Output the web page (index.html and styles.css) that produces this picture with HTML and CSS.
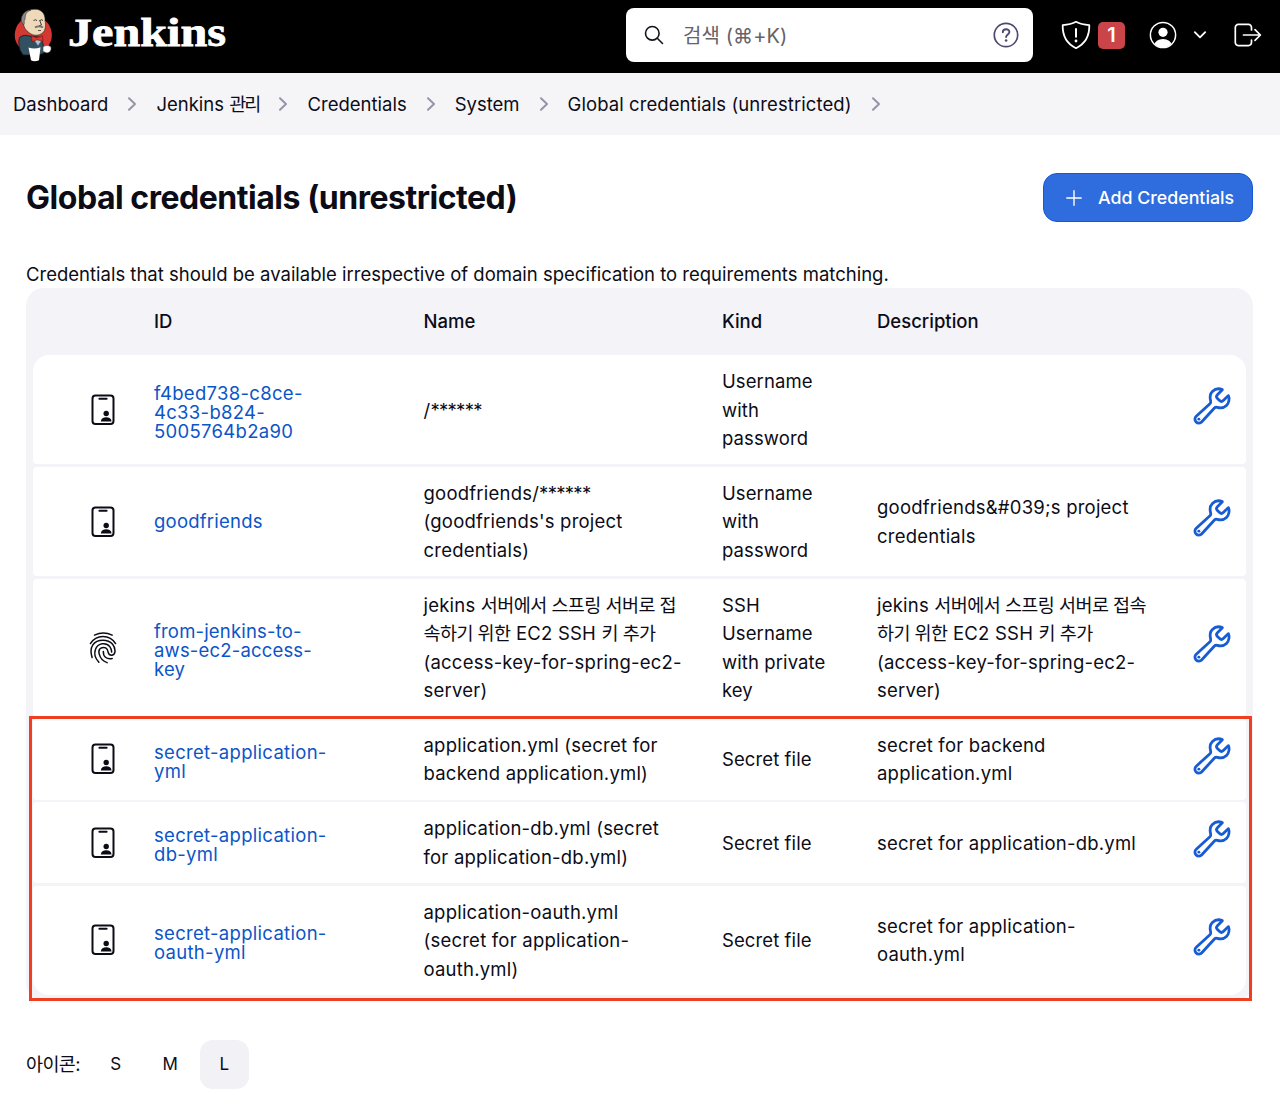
FILE: index.html
```html
<!DOCTYPE html>
<html lang="ko">
<head>
<meta charset="utf-8">
<title>Global credentials (unrestricted) - Jenkins</title>
<link rel="stylesheet" href="styles.css">
</head>
<body>
<svg class="defs" width="0" height="0">
  <symbol id="card" viewBox="0 0 24 32">
    <rect x="1.500" y="1.400" width="21" height="28.600" rx="3" fill="none" stroke="currentColor" stroke-width="2"/>
    <path d="M8.400 4.700h7.200" stroke="currentColor" stroke-width="2" stroke-linecap="round"/>
    <circle cx="15.200" cy="19.500" r="2.700" fill="currentColor"/>
    <path d="M9.800 27.500c.2-3 2.500-4.200 5.400-4.200s5.200 1.200 5.400 4.200z" fill="currentColor"/>
  </symbol>
  <symbol id="finger" viewBox="-1 -1 80 94">
    <g fill="none" stroke="currentColor" stroke-width="4.400" stroke-linecap="round">
      <path d="M14 8C31 0 49 0 66 8"/>
      <path d="M2 33C19 5 59 5 76 33"/>
      <path d="M7 74C-3 43 12 23 39 23C64 23 76 42 74 58C72 70 56 70 54 58C52 44 43 43 36 45C27 48 26 57 28 64C31 76 37 84 51 89"/>
      <path d="M27 88C14 74 13 60 17 50C24 30 49 29 59 42C64 49 64 53 64.500 58"/>
      <path d="M40 56C39 71 49 80 66 77"/>
    </g>
  </symbol>
  <symbol id="wrench" viewBox="0 0 512 512">
    <path d="M393.870 190a32.100 32.100 0 01-45.250 0l-26.570-26.570a32.090 32.090 0 010-45.260L382.190 58a1 1 0 00-.3-1.640c-38.820-16.640-89.150-8.160-121.110 23.570-30.580 30.350-32.320 76-21.120 115.840a31.930 31.930 0 01-9.060 32.080L64 380a48.170 48.170 0 1068 68l153.860-167a31.930 31.930 0 0131.600-9.130c39.540 10.590 84.540 8.600 114.720-21.190 32.490-32 39.500-88.560 23.750-120.930a1 1 0 00-1.600-.26z" fill="none" stroke="currentColor" stroke-width="34" stroke-linecap="round" stroke-miterlimit="10"/>
    <circle cx="96" cy="416" r="18" fill="currentColor"/>
  </symbol>
  <symbol id="chev" viewBox="0 0 10 16">
    <path d="M2 2.200l6 5.800-6 5.800" fill="none" stroke="currentColor" stroke-width="2" stroke-linecap="round" stroke-linejoin="round"/>
  </symbol>
</svg>

<header class="header">
  <a class="brand">
    <svg width="230" height="72" viewBox="0 0 230 72">
      <circle cx="33.300" cy="35" r="18.600" fill="#d33833"/>
      <path d="M20 37c3-2 6-2 9-1l9 1c3 0 4 3 5 7l1 9-5 2-16 0-3-5c-1-5-2-9 0-13z" fill="#335061" stroke="#10191f" stroke-width=".8"/>
      <path d="M24 14c3-4 8-5.500 14-4.500 5 1.500 7.500 6 7 11 1 5 .5 10-2.500 12.500-4 3-9 3-13 0-4-3-6-6-6-10-2-2-1-6 .5-9z" fill="#eed9ba" stroke="#30251d" stroke-width=".6"/>
      <path d="M31 10c-4 0-7 2-8.500 5-1.500 3-1.500 5-1 7l2 3c1-1 1-3 .5-4 1.500-1 1-4 1.500-6 1-3 3-4 5.500-5z" fill="#8a8a88" stroke="#292929" stroke-width=".5"/>
      <path d="M33.500 20.500q2-1.500 3.500 0M40 20.500q1.500-1.500 3 0M39.500 20l2 5-2.500.8" fill="none" stroke="#352c26" stroke-width=".9"/>
      <path d="M35 27.500c2-1.500 6-1.500 8 0" fill="none" stroke="#77716b" stroke-width="1.700"/>
      <path d="M38 30.500h3" stroke="#352c26" stroke-width=".8"/>
      <path d="M34 40l4 6 4-6" fill="#a9c7d2" stroke="#435c6a" stroke-width=".7"/>
      <path d="M31.500 35.800l5 2 6-2 .5 5.500-6-1.500-5 2z" fill="#df342e" stroke="#73120f" stroke-width=".6"/>
      <path d="M28.500 47.500c4 1.500 8 1.500 12-.3l-1.500 13c-3 1.300-6 1.300-8 0z" fill="#fff"/>
      <path d="M43 47c2-2 7-2 8 .5.500 3-1 5-4 5.500l-4-1.500z" fill="#fff" stroke="#444" stroke-width=".6"/>
      <text x="68" y="46.200" class="wordmark" textLength="158" lengthAdjust="spacingAndGlyphs">Jenkins</text>
    </svg>
  </a>
  <div class="search">
    <svg width="20" height="20" viewBox="0 0 20 20"><g fill="none" stroke="#14141f" stroke-width="1.600" stroke-linecap="round"><circle cx="8.300" cy="8.300" r="6.800"/><path d="M13.300 13.300l5.200 5.200"/></g></svg>
    <span class="placeholder">검색 (⌘+K)</span>
    <svg width="26" height="26" viewBox="0 0 26 26"><circle cx="13" cy="13" r="11.700" fill="none" stroke="#4d4870" stroke-width="1.700"/><path d="M9.800 10.300c0-4 6.700-4 6.600-.2 0 2.300-3.300 2.500-3.300 5" fill="none" stroke="#4d4870" stroke-width="1.900" stroke-linecap="round"/><circle cx="13.100" cy="18.500" r="1.300" fill="#4d4870"/></svg>
  </div>
  <div class="tools">
    <svg width="30" height="30" viewBox="0 0 30 30"><path d="M15 1.800c4 2.200 8.500 3 13.300 3.300C28.600 16 25 23.500 15 28.200 5 23.500 1.400 16 1.700 5.100 6.500 4.800 11 4 15 1.800z" fill="none" stroke="#fff" stroke-width="1.800" stroke-linejoin="round"/><path d="M15 9v7.800" stroke="#fff" stroke-width="2" stroke-linecap="round"/><circle cx="15" cy="21" r="1.400" fill="#fff"/></svg>
    <span class="badge">1</span>
    <svg class="user" width="28" height="28" viewBox="0 0 28 28"><clipPath id="uc"><circle cx="14" cy="14" r="12.500"/></clipPath><circle cx="14" cy="14" r="12.600" fill="none" stroke="#fff" stroke-width="1.500"/><circle cx="14" cy="11.300" r="4.600" fill="#fff"/><ellipse cx="14" cy="24" rx="8.600" ry="6" fill="#fff" clip-path="url(#uc)"/></svg>
    <svg class="down" width="14" height="10" viewBox="0 0 14 10"><path d="M1.800 2.200L7 7.400l5.200-5.200" fill="none" stroke="#fff" stroke-width="1.800" stroke-linecap="round" stroke-linejoin="round"/></svg>
    <svg class="exit" width="28" height="24" viewBox="0 0 28 24"><path d="M17.500 7V4.400a3 3 0 0 0-3-3H4.300a3 3 0 0 0-3 3v15.200a3 3 0 0 0 3 3h10.200a3 3 0 0 0 3-3V17M9.500 12h16.800M21 6.600l5.400 5.400-5.400 5.400" fill="none" stroke="#fff" stroke-width="1.700" stroke-linecap="round" stroke-linejoin="round"/></svg>
  </div>
</header>

<nav class="crumbs">
  <a>Dashboard</a><svg><use href="#chev"/></svg>
  <a>Jenkins <span class="menu-ko">관리</span></a><svg><use href="#chev"/></svg>
  <a>Credentials</a><svg><use href="#chev"/></svg>
  <a>System</a><svg><use href="#chev"/></svg>
  <a class="current">Global credentials (unrestricted)</a><svg><use href="#chev"/></svg>
</nav>

<main class="main">
  <div class="title-row">
    <h1>Global credentials (unrestricted)</h1>
    <button class="add"><svg width="16" height="16" viewBox="0 0 16 16"><path d="M8 .8v14.400M.8 8h14.400" stroke="#fff" stroke-width="1.400" stroke-linecap="round"/></svg><span>Add Credentials</span></button>
  </div>
  <p class="intro">Credentials that should be available irrespective of domain specification to requirements matching.</p>

  <div class="table">
    <div class="row head"><span></span><span>ID</span><span>Name</span><span>Kind</span><span>Description</span><span></span></div>
    <div class="row"><svg class="card"><use href="#card"/></svg><a class="id multi">f4bed738-c8ce-<br>4c33-b824-<br>5005764b2a90</a><span>/<span class="stars">******</span></span><span class="kind">Username<br>with<br>password</span><span></span><svg class="wrench"><use href="#wrench"/></svg></div>
    <div class="row"><svg class="card"><use href="#card"/></svg><a class="id">goodfriends</a><span>goodfriends/<span class="stars">******</span><br>(goodfriends's project<br>credentials)</span><span class="kind">Username<br>with<br>password</span><span>goodfriends&amp;#039;s project<br>credentials</span><svg class="wrench"><use href="#wrench"/></svg></div>
    <div class="row"><svg class="finger"><use href="#finger"/></svg><a class="id multi narrow">from-jenkins-to-<br>aws-ec2-access-<br>key</a><span>jekins <span class="ko">서버에서 스프링 서버로 접<br>속하기 위한</span> EC2 SSH <span class="ko">키 추가</span><br>(access-key-for-spring-ec2-<br>server)</span><span class="kind">SSH<br>Username<br>with private<br>key</span><span>jekins <span class="ko">서버에서 스프링 서버로 접속<br>하기 위한</span> EC2 SSH <span class="ko">키 추가</span><br>(access-key-for-spring-ec2-<br>server)</span><svg class="wrench"><use href="#wrench"/></svg></div>
    <div class="row"><svg class="card"><use href="#card"/></svg><a class="id multi">secret-application-<br>yml</a><span>application.yml (secret for<br>backend application.yml)</span><span class="kind">Secret file</span><span>secret for backend<br>application.yml</span><svg class="wrench"><use href="#wrench"/></svg></div>
    <div class="row"><svg class="card"><use href="#card"/></svg><a class="id multi">secret-application-<br>db-yml</a><span>application-db.yml (secret<br>for application-db.yml)</span><span class="kind">Secret file</span><span>secret for application-db.yml</span><svg class="wrench"><use href="#wrench"/></svg></div>
    <div class="row"><svg class="card"><use href="#card"/></svg><a class="id multi">secret-application-<br>oauth-yml</a><span>application-oauth.yml<br>(secret for application-<br>oauth.yml)</span><span class="kind">Secret file</span><span>secret for application-<br>oauth.yml</span><svg class="wrench"><use href="#wrench"/></svg></div>
    <div class="highlight"></div>
  </div>

  <div class="sizes"><span class="label">아이콘:</span><a>S</a><a>M</a><a class="on">L</a></div>
</main>
</body>
</html>
```
FILE: styles.css
```css
* { box-sizing: border-box; }
body {
  margin: 0;
  background: #fff;
  color: #0c0c17;
  font-family: Inter, "Noto Sans CJK KR", sans-serif;
  font-size: 18.5px;
  line-height: 28.430px;
  white-space: nowrap;
}
.defs { position: absolute; }
svg { display: block; flex: none; }

.header {
  display: flex;
  height: 73px;
  background: #000;
}
.brand { width: 626px; }
.wordmark {
  font-family: "Liberation Serif", serif;
  font-weight: 700;
  font-size: 41px;
  fill: #fff;
  stroke: #fff;
  stroke-width: .8px;
}
.search {
  display: flex;
  align-items: center;
  width: 407px;
  height: 54px;
  margin-top: 8px;
  padding: 0 14px 0 18px;
  border-radius: 8px;
  background: #fff;
}
.placeholder {
  flex: 1;
  padding: 2px 0 0 19px;
  color: #63636a;
  font-size: 20px;
  letter-spacing: .1px;
}
.tools {
  display: flex;
  align-items: center;
  height: 70px;
  padding-left: 28px;
}
.badge {
  width: 27px;
  height: 27px;
  margin-left: 7px;
  border-radius: 5px;
  background: #cb444a;
  color: #fff;
  font-size: 20px;
  font-weight: 600;
  line-height: 27px;
  text-align: center;
}
.user { margin-left: 24px; }
.down { margin-left: 16px; }
.exit { margin-left: 26.500px; }

.crumbs {
  display: flex;
  align-items: center;
  height: 62px;
  padding-left: 13px;
  background: #f5f5f8;
}
.crumbs svg { width: 10px; height: 16px; margin: 0 19px; color: #9595a8; }
.menu-ko { letter-spacing: -1.900px; }
.current { letter-spacing: .080px; }

.main { padding: 38px 27px 0 26px; }
.title-row { display: flex; justify-content: space-between; align-items: center; height: 49px; }
h1 { margin: 0; padding-top: 2px; font-size: 32px; font-weight: 700; letter-spacing: -.470px; }
.add {
  display: flex;
  align-items: center;
  gap: 16px;
  width: 210px;
  height: 49px;
  padding: 0 0 0 22px;
  border: 1px solid #1459d3;
  border-radius: 14px;
  background: #2f6cdd;
  color: #fff;
  font: 500 17.800px Inter, sans-serif;
}
.intro { margin: 38px 0 0; }

.table {
  position: relative;
  display: grid;
  gap: 2.600px;
  padding: 0 7px 6px;
  border-radius: 18px;
  background: #f3f3f8;
  letter-spacing: .220px;
}
.row {
  display: grid;
  grid-template-columns: 121px 269.500px 298.500px 155px 309px 1fr;
  align-items: center;
  padding: 12.200px 0 11.700px;
  border-radius: 4px;
  background: #fff;
}
.head {
  height: 64px;
  padding: 2px 0 0;
  background: none;
  font-weight: 500;
  letter-spacing: 0;
}
.head + .row { border-radius: 16px 16px 4px 4px; }
.row:nth-last-child(2) { border-radius: 4px 4px 16px 16px; }
.id { color: #0b55c8; }
.multi { padding-top: 5px; line-height: 19px; letter-spacing: .300px; }
.narrow { letter-spacing: .180px; }
.kind { letter-spacing: .100px; }
.stars { letter-spacing: -.700px; }
.ko { letter-spacing: -.550px; }
.card { width: 24px; height: 32px; margin-left: 58px; }
.finger { width: 28px; height: 32px; margin-left: 56px; }
.wrench { width: 42px; height: 42px; margin: -7px 0 0 5px; color: #175cd3; }
.highlight {
  position: absolute;
  left: 3px;
  right: 1px;
  top: 428px;
  bottom: 0;
  border: 3px solid #ee3f23;
}

.sizes { display: flex; align-items: center; margin-top: 39px; font-size: 17px; }
.sizes a {
  width: 49px;
  height: 49px;
  margin-right: 5.300px;
  border-radius: 13px;
  line-height: 49px;
  text-align: center;
}
.label { width: 65.300px; letter-spacing: -.600px; }
.sizes .label { font-size: 18.500px; }
.sizes .on { background: #f1f1f6; }
```
